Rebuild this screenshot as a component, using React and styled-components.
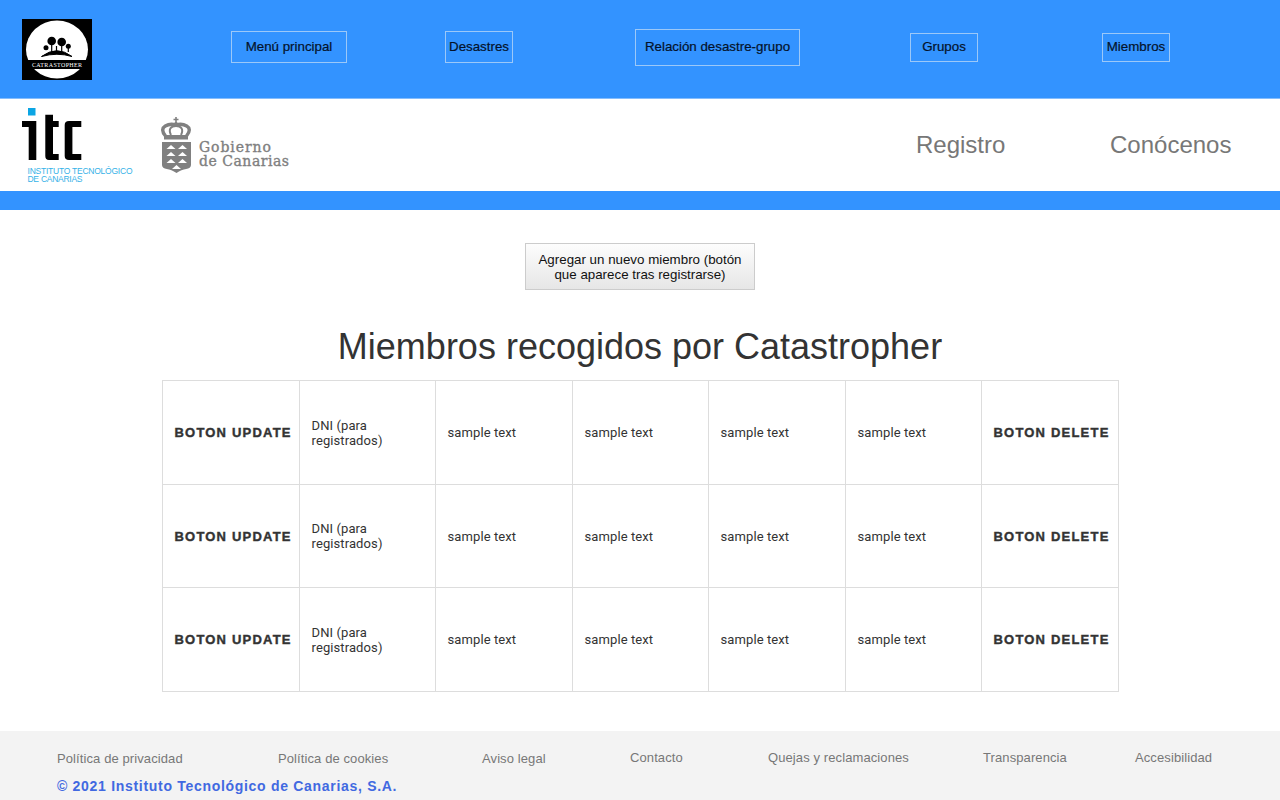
import styled, { createGlobalStyle } from "styled-components";

const Global = createGlobalStyle`
  body {
    margin: 0;
    background: #fff;
    font-family: "Liberation Sans", Arial, sans-serif;
  }
`;

const TopBar = styled.header`
  height: 94px;
  background: #3393ff;
  border-bottom: 1px solid #85bdfd;
  padding: 0 0 4px 22px;
  display: grid;
  grid-template-columns: 209px 214px 190px 275px 192px auto;
  align-items: center;
  justify-items: start;
`;

const Logo = styled.svg`
  display: block;
  width: 70px;
  height: 61px;
  margin-top: 4px;
`;

const NavButton = styled.a`
  box-sizing: border-box;
  display: flex;
  align-items: center;
  justify-content: center;
  height: ${(p) => p.$h}px;
  width: ${(p) => p.$w}px;
  padding-bottom: 1px;
  border: 1px solid #9cc8f8;
  font-size: 13.33px;
  color: #04122a;
  -webkit-text-stroke: 0.2px #04122a;
`;

const BrandBar = styled.div`
  height: 92px;
  display: flex;
  align-items: center;
  padding-left: 22px;
`;

const ItcLogo = styled.svg`
  display: block;
  width: 112px;
  height: 76px;
  margin-top: 1px;
`;

const CanariasLogo = styled.svg`
  display: block;
  width: 130px;
  height: 58px;
  margin-left: 27px;
  margin-top: 2px;
`;

const BrandLinks = styled.nav`
  margin-left: auto;
  display: grid;
  grid-template-columns: 194px 170px;
  font-size: 24px;
  color: #777;
`;

const BlueStrip = styled.div`
  height: 19px;
  background: #3393ff;
`;

const Main = styled.main`
  padding-top: 33px;
  display: flex;
  flex-direction: column;
  align-items: center;
`;

const AddButton = styled.button`
  box-sizing: border-box;
  width: 230px;
  height: 47px;
  padding: 0 8px;
  border: 1px solid #ccc;
  background: linear-gradient(#fdfdfd, #e6e6e6);
  font-family: inherit;
  font-size: 13.33px;
  line-height: 15px;
  color: #111;
`;

const Title = styled.h1`
  margin: 36px 0 12px;
  font-size: 36px;
  line-height: 42px;
  font-weight: 400;
  color: #333;
`;

const Table = styled.table`
  width: 957px;
  table-layout: fixed;
  border-collapse: collapse;
  font-family: Roboto, sans-serif;
  font-size: 13px;
  letter-spacing: 0.1px;
  color: #333;
`;

const Column = styled.col`
  width: ${(p) => p.$w}px;
`;

const Row = styled.tr`
  height: ${(p) => p.$h}px;
`;

const Cell = styled.td`
  border: 1px solid #ddd;
  padding: 0 12px;
  line-height: 15px;
`;

const ActionCell = styled(Cell)`
  padding-right: 0;
  font-family: "Liberation Sans", sans-serif;
  font-size: 13px;
  font-weight: 700;
  letter-spacing: 1.2px;
  white-space: nowrap;
  -webkit-text-stroke: 0.4px #333;
`;

const Footer = styled.footer`
  margin-top: 39px;
  height: 69px;
  background: #f3f3f3;
  padding: 19px 0 0 57px;
  box-sizing: border-box;
`;

const FooterLinks = styled.div`
  display: grid;
  grid-template-columns: 221px 204px 148px 138px 215px 152px auto;
  font-size: 13px;
  line-height: 15px;
  letter-spacing: 0.1px;
  color: #777;
`;

const FooterLink = styled.a`
  margin-top: ${(p) => (p.$raised ? 0 : 1)}px;
`;

const Copyright = styled.p`
  margin: 13px 0 0;
  font-size: 14px;
  line-height: 15px;
  font-weight: 700;
  letter-spacing: 0.7px;
  color: #4169e1;
`;

const navItems = [
  { label: "Menú principal", w: 116, h: 32 },
  { label: "Desastres", w: 68, h: 32 },
  { label: "Relación desastre-grupo", w: 165, h: 37 },
  { label: "Grupos", w: 68, h: 29 },
  { label: "Miembros", w: 68, h: 29 },
];

const columns = [137, 136, 137, 136, 137, 136, 137];

const footerLinks = [
  { label: "Política de privacidad" },
  { label: "Política de cookies" },
  { label: "Aviso legal" },
  { label: "Contacto", raised: true },
  { label: "Quejas y reclamaciones", raised: true },
  { label: "Transparencia", raised: true },
  { label: "Accesibilidad", raised: true },
];

const CatastropherLogo = () => (
  <Logo viewBox="0 0 70 61">
    <rect width="70" height="61" fill="#000" />
    <ellipse cx="35" cy="30.500" rx="31" ry="29" fill="#fff" />
    <circle cx="29.700" cy="22" r="4.300" fill="#000" />
    <circle cx="39.700" cy="23" r="4.300" fill="#000" />
    <circle cx="46.300" cy="27.300" r="2.500" fill="#000" />
    <circle cx="24" cy="28.700" r="2.500" fill="#000" />
    <path d="M29.700 24v9M39.700 25v8M34.500 27v6M46.300 29v4" stroke="#000" strokeWidth="1.200" />
    <path d="M19.500 37.500Q35 26 50 37.500Q35 33 19.500 37.500Z" fill="#000" stroke="#000" />
    <rect x="0" y="41" width="70" height="9" fill="#000" />
    <text x="10" y="48" fontFamily="Liberation Serif, serif" fontSize="6" fill="#fff" textLength="50">
      CATRASTOPHER
    </text>
  </Logo>
);

const Itc = () => (
  <ItcLogo viewBox="0 0 112 76">
    <rect x="6" y="0" width="7.500" height="7.500" fill="#0ba5e4" />
    <path d="M0 13h14.300v39H6.700V19H0z" fill="#000" />
    <path d="M23.300 6.700H31V13h5.700v6H31v27h5.700v6H27q-3.700 0-3.700-4z" fill="#000" />
    <path d="M59.300 13v6H50.400v27h8.900v6H47q-4.300 0-4.300-4V17q0-4 4.300-4z" fill="#000" />
    <text x="5.500" y="66" fontFamily="Liberation Sans, sans-serif" fontSize="8.500" fill="#0ba5e4" textLength="105" opacity="0.85">
      INSTITUTO TECNOLÓGICO
    </text>
    <text x="5.500" y="74" fontFamily="Liberation Sans, sans-serif" fontSize="8.500" fill="#0ba5e4" textLength="55" opacity="0.85">
      DE CANARIAS
    </text>
  </ItcLogo>
);

const Canarias = () => (
  <CanariasLogo viewBox="0 0 130 58">
    <path d="M15 0v6M12.500 2.500h5" stroke="#808080" strokeWidth="1.600" />
    <circle cx="15" cy="7" r="2" fill="#808080" />
    <path d="M4.500 19C-4 9 9 6 15 8c6-2 19 1 10.500 11" fill="none" stroke="#808080" strokeWidth="3.400" />
    <path d="M10 18C7 12 10 9 15 9M20 18c3-6 0-9-5-9" fill="none" stroke="#808080" strokeWidth="2" />
    <path d="M3 18h24v4.500H3z" fill="#808080" />
    <path d="M1 25h29v23c0 5-8 3-14.500 8C9 51 1 53 1 48z" fill="#808080" />
    <path d="M5.500 32l4.500-4 4.500 4zM17 32l4.500-4 4.500 4zM5.500 39l4.500-4 4.500 4zM17 39l4.500-4 4.500 4zM5.500 46l4.500-4 4.500 4zM17 46l4.500-4 4.500 4zM11 52l4.500-4 4.500 4z" fill="#fff" />
    <text x="38" y="35" fontFamily="DejaVu Serif, serif" fontSize="14" fill="#808080" stroke="#808080" strokeWidth="0.350" textLength="72">
      Gobierno
    </text>
    <text x="38" y="49" fontFamily="DejaVu Serif, serif" fontSize="14" fill="#808080" stroke="#808080" strokeWidth="0.350" textLength="90">
      de Canarias
    </text>
  </CanariasLogo>
);

export default function App() {
  return (
    <>
      <Global />
      <TopBar>
        <CatastropherLogo />
        {navItems.map((item) => (
          <NavButton key={item.label} $w={item.w} $h={item.h}>
            {item.label}
          </NavButton>
        ))}
      </TopBar>
      <BrandBar>
        <Itc />
        <Canarias />
        <BrandLinks>
          <a>Registro</a>
          <a>Conócenos</a>
        </BrandLinks>
      </BrandBar>
      <BlueStrip />
      <Main>
        <AddButton>Agregar un nuevo miembro (botón que aparece tras registrarse)</AddButton>
        <Title>Miembros recogidos por Catastropher</Title>
        <Table>
          <colgroup>
            {columns.map((w, i) => (
              <Column key={i} $w={w} />
            ))}
          </colgroup>
          <tbody>
            {[104, 103, 104].map((h, i) => (
              <Row key={i} $h={h}>
                <ActionCell>BOTON UPDATE</ActionCell>
                <Cell>DNI (para registrados)</Cell>
                <Cell>sample text</Cell>
                <Cell>sample text</Cell>
                <Cell>sample text</Cell>
                <Cell>sample text</Cell>
                <ActionCell>BOTON DELETE</ActionCell>
              </Row>
            ))}
          </tbody>
        </Table>
      </Main>
      <Footer>
        <FooterLinks>
          {footerLinks.map((link) => (
            <FooterLink key={link.label} $raised={link.raised}>
              {link.label}
            </FooterLink>
          ))}
        </FooterLinks>
        <Copyright>© 2021 Instituto Tecnológico de Canarias, S.A.</Copyright>
      </Footer>
    </>
  );
}
